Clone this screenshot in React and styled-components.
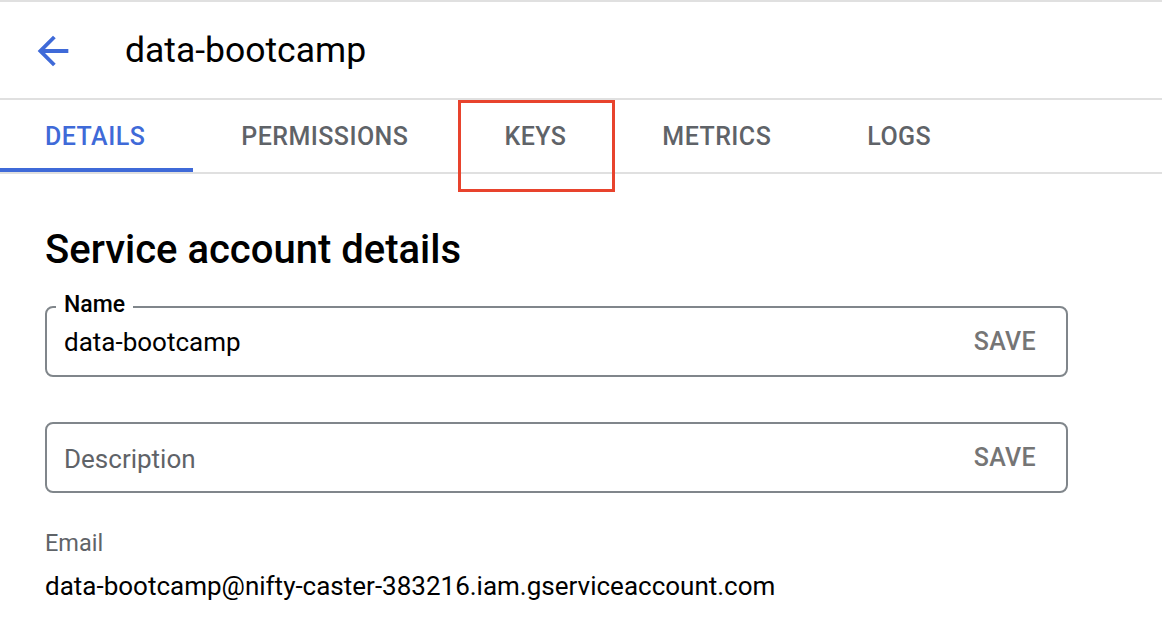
import React from 'react';
import styled, { createGlobalStyle } from 'styled-components';

const GlobalStyle = createGlobalStyle`
  html, body {
    margin: 0;
    padding: 0;
    background: #fff;
    font-family: Roboto, "Liberation Sans", Arial, sans-serif;
    color: #202124;
  }
`;

const Page = styled.div`
  width: 1162px;
  height: 626px;
  overflow: hidden;
  border-top: 2px solid #e0e0e0;
  box-sizing: border-box;
`;

const Header = styled.div`
  height: 96px;
  display: flex;
  align-items: center;
  padding-left: 30px;
  border-bottom: 2px solid #e0e0e0;
`;

const BackButton = styled.button`
  border: 0;
  background: none;
  padding: 0;
  width: 46px;
  height: 46px;
  display: flex;
  align-items: center;
  justify-content: center;
  cursor: pointer;
  margin-right: 49px;
  margin-top: 2px;
`;

const Title = styled.h1`
  margin: 0;
  font-size: 35.5px;
  font-weight: 400;
  color: #000;
`;

const Tabs = styled.nav`
  display: flex;
  height: 72px;
  border-bottom: 2px solid #e0e0e0;
`;

const Tab = styled.div`
  padding: 5px 48px 0;
  display: flex;
  align-items: center;
  font-size: 25px;
  font-weight: 500;
  letter-spacing: 0.45px;
  color: ${p => (p.$active ? '#3f6ad8' : '#5f6368')};
  border-bottom: 4px solid ${p => (p.$active ? '#3f6ad8' : 'transparent')};
  position: relative;
  &:first-child {
    padding-left: 45px;
  }
`;

const Highlight = styled.span`
  position: absolute;
  left: 2px;
  right: -1px;
  top: 0;
  height: 92px;
  border: 3px solid #e8432d;
  box-sizing: border-box;
  pointer-events: none;
`;

const Content = styled.main`
  padding: 52px 0 0 45px;
  width: 1023px;
`;

const Heading = styled.h2`
  margin: 0 0 32px;
  font-size: 40px;
  font-weight: 500;
  color: #000;
  line-height: 48px;
`;

const Field = styled.div`
  position: relative;
  height: 71px;
  border: 2px solid #80868b;
  border-radius: 8px;
  box-sizing: border-box;
  display: flex;
  align-items: center;
  padding: 0 30px 0 17px;
  margin-bottom: ${p => p.$gap || 0}px;
`;

const FieldLabel = styled.span`
  position: absolute;
  top: -16px;
  left: 9px;
  padding: 0 8px;
  background: #fff;
  font-size: 23px;
  font-weight: 500;
  color: #000;
  line-height: 26px;
`;

const FieldValue = styled.span`
  flex: 1;
  font-size: 26px;
  margin-top: ${p => (p.$placeholder ? 2 : 0)}px;
  color: ${p => (p.$placeholder ? '#5f6368' : '#000')};
`;

const SaveButton = styled.button`
  border: 0;
  background: none;
  padding: 0;
  font-family: inherit;
  font-size: 25px;
  font-weight: 500;
  letter-spacing: 0.3px;
  color: #757575;
  cursor: pointer;
`;

const InfoLabel = styled.div`
  font-size: 23.5px;
  color: #5f6368;
  margin-bottom: 14px;
`;

const InfoValue = styled.div`
  font-size: 26px;
  color: #000;
`;

const tabs = ['DETAILS', 'PERMISSIONS', 'KEYS', 'METRICS', 'LOGS'];

export default function App() {
  return (
    <Page>
      <GlobalStyle />
      <Header>
        <BackButton aria-label="Back">
          <svg width="46" height="46" viewBox="0 0 24 24">
            <path d="M20 11H7.83l5.59-5.59L12 4l-8 8 8 8 1.41-1.41L7.83 13H20v-2z" fill="#3f6ad8" />
          </svg>
        </BackButton>
        <Title>data-bootcamp</Title>
      </Header>
      <Tabs>
        {tabs.map((t, i) => (
          <Tab key={t} $active={i === 0}>
            {t}
            {t === 'KEYS' && <Highlight />}
          </Tab>
        ))}
      </Tabs>
      <Content>
        <Heading>Service account details</Heading>
        <Field $gap={45}>
          <FieldLabel>Name</FieldLabel>
          <FieldValue>data-bootcamp</FieldValue>
          <SaveButton>SAVE</SaveButton>
        </Field>
        <Field $gap={36}>
          <FieldValue $placeholder>Description</FieldValue>
          <SaveButton>SAVE</SaveButton>
        </Field>
        <InfoLabel>Email</InfoLabel>
        <InfoValue>data-bootcamp@nifty-caster-383216.iam.gserviceaccount.com</InfoValue>
      </Content>
    </Page>
  );
}
